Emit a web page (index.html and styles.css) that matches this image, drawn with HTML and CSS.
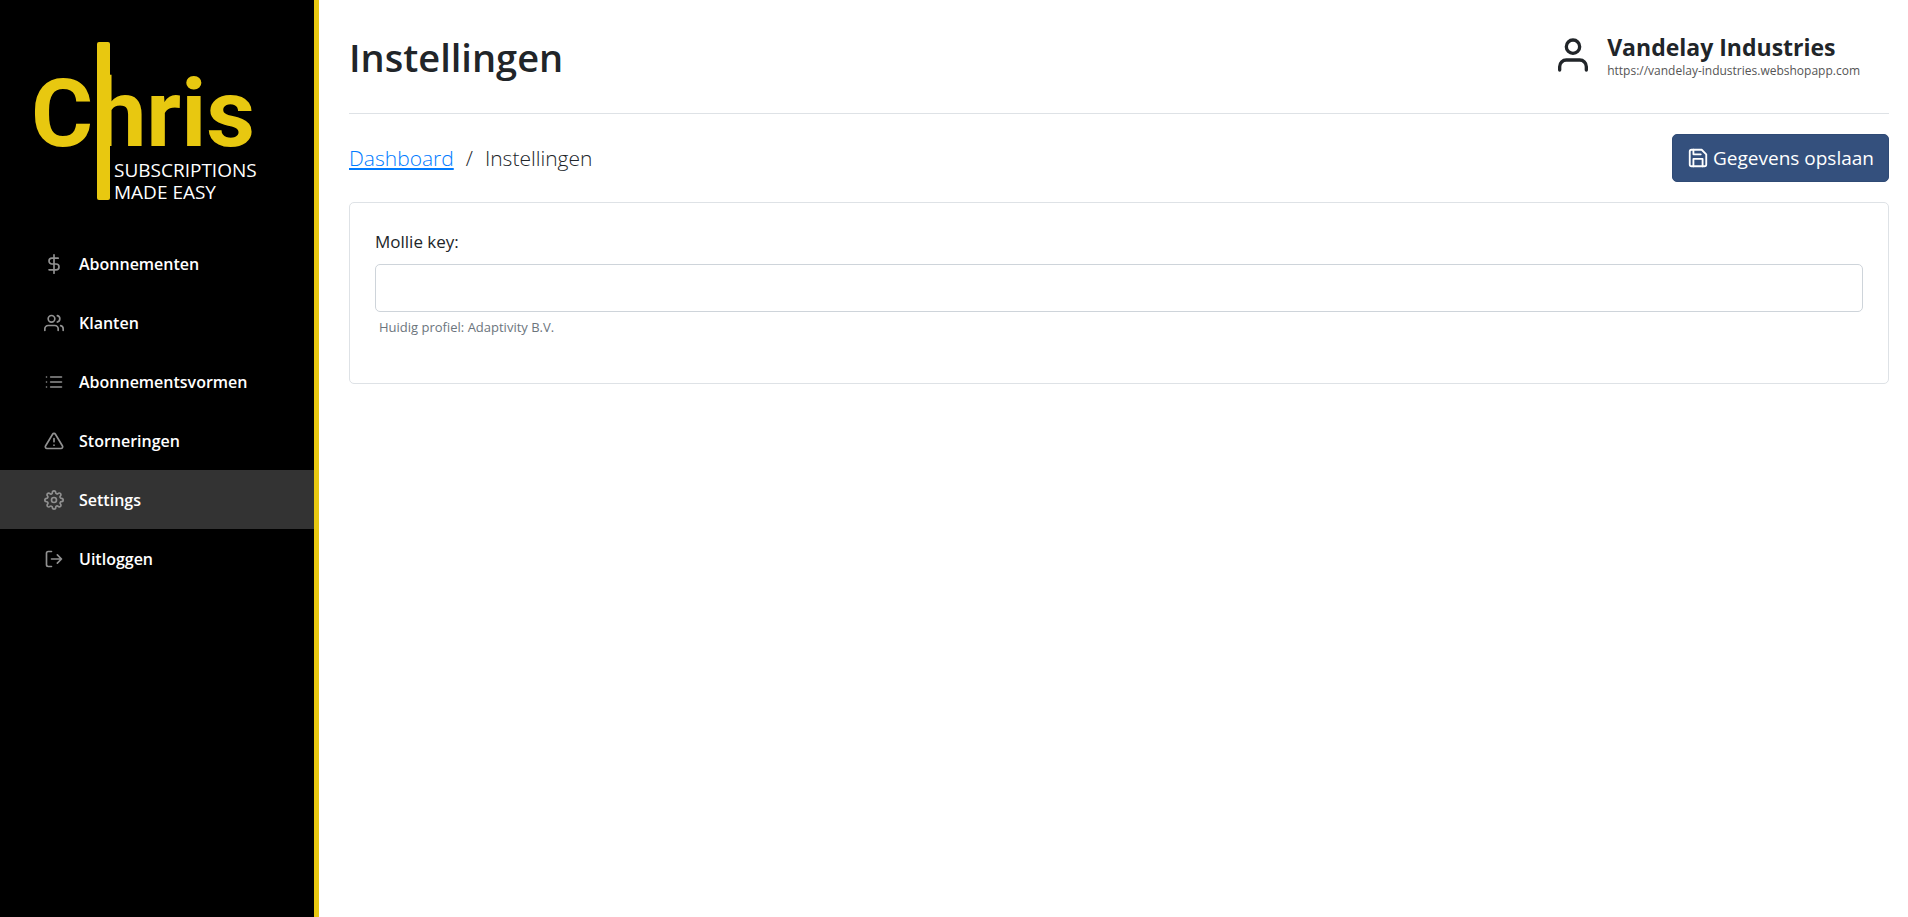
FILE: index.html
```html
<!DOCTYPE html>
<html lang="nl">
<head>
    <meta charset="utf-8">
    <meta name="viewport" content="width=device-width, initial-scale=1">
    <title>Instellingen</title>
    <link rel="stylesheet" href="styles.css">
</head>
<body>
    <aside class="sidebar">
        <a class="logo" href="#">
            <svg width="222" height="160" viewBox="0 0 222 160">
                <text class="logo-name" x="-5" y="104">Chris</text>
                <rect x="61" y="0" width="13" height="158" rx="2" fill="#e8c810"/>
                <text class="logo-tag" x="78" y="135">SUBSCRIPTIONS</text>
                <text class="logo-tag" x="78" y="157">MADE EASY</text>
            </svg>
        </a>
        <nav class="menu">
            <a href="#">
                <svg class="icon" viewBox="0 0 24 24"><path d="M12 1v22M17 5H9.500a3.500 3.500 0 0 0 0 7h5a3.500 3.500 0 0 1 0 7H6"/></svg>
                Abonnementen
            </a>
            <a href="#">
                <svg class="icon" viewBox="0 0 24 24"><path d="M17 21v-2a4 4 0 0 0-4-4H5a4 4 0 0 0-4 4v2"/><circle cx="9" cy="7" r="4"/><path d="M23 21v-2a4 4 0 0 0-3-3.870M16 3.130a4 4 0 0 1 0 7.750"/></svg>
                Klanten
            </a>
            <a href="#">
                <svg class="icon" viewBox="0 0 24 24"><path d="M8 6h13M8 12h13M8 18h13M3 6h.01M3 12h.01M3 18h.01"/></svg>
                Abonnementsvormen
            </a>
            <a href="#">
                <svg class="icon" viewBox="0 0 24 24"><path d="M10.290 3.860L1.820 18a2 2 0 0 0 1.710 3h16.940a2 2 0 0 0 1.710-3L13.710 3.860a2 2 0 0 0-3.420 0zM12 9v4M12 17h.01"/></svg>
                Storneringen
            </a>
            <a href="#" class="active">
                <svg class="icon" viewBox="0 0 24 24"><circle cx="12" cy="12" r="3"/><path d="M19.400 15a1.650 1.650 0 0 0 .33 1.820l.06.06a2 2 0 0 1 0 2.830 2 2 0 0 1-2.830 0l-.06-.06a1.650 1.650 0 0 0-1.820-.33 1.650 1.650 0 0 0-1 1.510V21a2 2 0 0 1-2 2 2 2 0 0 1-2-2v-.09A1.650 1.650 0 0 0 9 19.400a1.650 1.650 0 0 0-1.820.33l-.06.06a2 2 0 0 1-2.830 0 2 2 0 0 1 0-2.830l.06-.06a1.650 1.650 0 0 0 .33-1.820 1.650 1.650 0 0 0-1.510-1H3a2 2 0 0 1-2-2 2 2 0 0 1 2-2h.09A1.650 1.650 0 0 0 4.600 9a1.650 1.650 0 0 0-.33-1.820l-.06-.06a2 2 0 0 1 0-2.830 2 2 0 0 1 2.830 0l.06.06a1.650 1.650 0 0 0 1.820.33H9a1.650 1.650 0 0 0 1-1.510V3a2 2 0 0 1 2-2 2 2 0 0 1 2 2v.09a1.650 1.650 0 0 0 1 1.510 1.650 1.650 0 0 0 1.820-.33l.06-.06a2 2 0 0 1 2.830 0 2 2 0 0 1 0 2.830l-.06.06a1.650 1.650 0 0 0-.33 1.820V9a1.650 1.650 0 0 0 1.510 1H21a2 2 0 0 1 2 2 2 2 0 0 1-2 2h-.09a1.650 1.650 0 0 0-1.510 1z"/></svg>
                Settings
            </a>
            <a href="#">
                <svg class="icon" viewBox="0 0 24 24"><path d="M9 21H5a2 2 0 0 1-2-2V5a2 2 0 0 1 2-2h4M16 17l5-5-5-5M21 12H9"/></svg>
                Uitloggen
            </a>
        </nav>
    </aside>

    <main>
        <header>
            <h1>Instellingen</h1>
            <div class="account">
                <svg class="icon" viewBox="0 0 24 24"><path d="M20 21v-2a4 4 0 0 0-4-4H8a4 4 0 0 0-4 4v2"/><circle cx="12" cy="7" r="4"/></svg>
                <div>
                    <div class="account-name">Vandelay Industries</div>
                    <div class="account-url">https://vandelay-industries.webshopapp.com</div>
                </div>
            </div>
        </header>

        <div class="toolbar">
            <div class="breadcrumb">
                <a href="#">Dashboard</a>
                <span>/</span>
                <span>Instellingen</span>
            </div>
            <button type="submit" form="settings" class="btn">
                <svg class="icon" viewBox="0 0 24 24"><path d="M19 21H5a2 2 0 0 1-2-2V5a2 2 0 0 1 2-2h11l5 5v11a2 2 0 0 1-2 2z"/><path d="M17 21v-8H7v8M7 3v5h8"/></svg>
                Gegevens opslaan
            </button>
        </div>

        <form id="settings" class="card">
            <label for="mollie-key">Mollie key:</label>
            <input type="text" id="mollie-key" name="mollie_key">
            <small>Huidig profiel: Adaptivity B.V.</small>
        </form>
    </main>
</body>
</html>
```
FILE: styles.css
```css
* {
    box-sizing: border-box;
}

body {
    display: flex;
    min-height: 100vh;
    margin: 0;
    font-family: 'Open Sans', 'Noto Sans', sans-serif;
    font-size: 17px;
    line-height: 24px;
    color: #212529;
    background-color: #fff;
}

.icon {
    flex: none;
    width: 20px;
    height: 20px;
    fill: none;
    stroke: currentColor;
    stroke-width: 2;
    stroke-linecap: round;
    stroke-linejoin: round;
}

/* sidebar */
.sidebar {
    flex: none;
    width: 319px;
    background-color: #000;
    border-right: 5px solid #e8c810;
}

.logo {
    display: block;
    padding: 42px 36px 32px;
}

.logo svg {
    display: block;
    overflow: visible;
}

.logo-name {
    font-family: Roboto, sans-serif;
    font-size: 95px;
    font-weight: bold;
    fill: #e8c810;
}

.logo-tag {
    font-size: 19px;
    fill: #fff;
}

.menu a {
    display: flex;
    align-items: center;
    gap: 15px;
    height: 59px;
    padding: 0 44px;
    color: #fff;
    font-size: 16px;
    font-weight: 600;
    text-decoration: none;
}

.menu a.active,
.menu a:hover {
    background-color: #333;
}

.menu .icon {
    color: #919191;
}

/* content */
main {
    flex: 1;
    min-width: 0;
    padding: 0 19px 20px 30px;
}

header {
    display: flex;
    justify-content: space-between;
    align-items: flex-start;
    padding: 33px 29px 30px 0;
    border-bottom: 1px solid #dee2e6;
}

h1 {
    margin: 0;
    font-size: 38px;
    line-height: 48px;
    font-weight: 600;
}

.account {
    display: flex;
    align-items: flex-start;
    gap: 14px;
    padding-top: 2px;
}

.account .icon {
    width: 40px;
    height: 40px;
}

.account-name {
    font-size: 23px;
    font-weight: 700;
}

.account-url {
    font-size: 12px;
    color: #555;
}

.toolbar {
    display: flex;
    justify-content: space-between;
    align-items: center;
    padding: 20px 0;
}

.breadcrumb {
    display: flex;
    gap: 12px;
    font-size: 21px;
    font-weight: 300;
}

.breadcrumb a {
    color: #007bff;
}

.btn {
    display: flex;
    align-items: center;
    gap: 4px;
    height: 48px;
    padding: 0 14px;
    font-family: inherit;
    font-size: 19px;
    color: #fff;
    background-color: #34507d;
    border: 1px solid #2f4a75;
    border-radius: 5px;
    cursor: pointer;
}

.btn .icon {
    width: 22px;
    height: 22px;
}

.card {
    display: flex;
    flex-direction: column;
    padding: 27px 25px 44px;
    border: 1px solid #dee2e6;
    border-radius: 5px;
}

.card input {
    height: 48px;
    margin: 10px 0 3px;
    padding: 0 16px;
    font: inherit;
    border: 1px solid #ced4da;
    border-radius: 5px;
}

.card small {
    padding: 0 4px;
    font-size: 13px;
    color: #6c757d;
}
```
